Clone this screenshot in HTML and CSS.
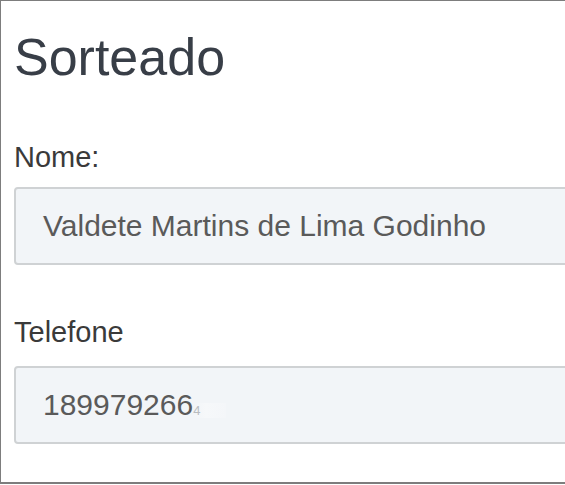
FILE: index.html
```html
<!DOCTYPE html>
<html lang="pt">
<head>
    <meta charset="UTF-8">
    <meta name="viewport" content="width=device-width, initial-scale=1.0">
    <title>Sorteado</title>
    <link rel="stylesheet" href="styles.css">
</head>
<body>

    <div id="sorteio-frame">
        <h1>Sorteado</h1>

        <div class="field">
            <label for="nome">Nome:</label>
            <div class="field-box" id="nome">Valdete Martins de Lima Godinho</div>
        </div>

        <div class="field">
            <label for="telefone">Telefone</label>
            <div class="field-box" id="telefone">189979266<span class="masked">4</span></div>
        </div>
    </div>

</body>
</html>
```
FILE: styles.css
```css
body {
    font-family: "Liberation Sans", Arial, sans-serif;
    background-color: #fff;
    margin: 0;
    padding: 0;
}
#sorteio-frame {
    width: 561px;
    height: 481px;
    border: 1px solid #7d7d7d;
    border-width: 1px 2px 2px 1px;
    overflow: hidden;
    padding: 0 0 0 13px;
    box-sizing: content-box;
}
h1 {
    font-size: 52px;
    font-weight: normal;
    line-height: 56px;
    color: #383e47;
    margin: 28px 0 0 0;
}
.field {
    margin-top: 55px;
}
.field + .field {
    margin-top: 50px;
}
label {
    display: block;
    font-size: 29px;
    line-height: 35px;
    color: #3a3a3a;
}
.field-box {
    margin-top: 12px;
    width: 580px;
    height: 74px;
    line-height: 74px;
    padding: 0 27px;
    font-size: 30px;
    color: #5a5a5a;
    background: #f2f5f8;
    border: 2px solid #cfd2d4;
    border-radius: 4px;
    white-space: nowrap;
}
.field + .field .field-box {
    margin-top: 16px;
}
.masked {
    color: #b9bcc0;
    font-size: 13px;
    padding-right: 26px;
    background: linear-gradient(to right, #f2f5f8, #f6f8fa 40%, #f4f6f9);
}
```
